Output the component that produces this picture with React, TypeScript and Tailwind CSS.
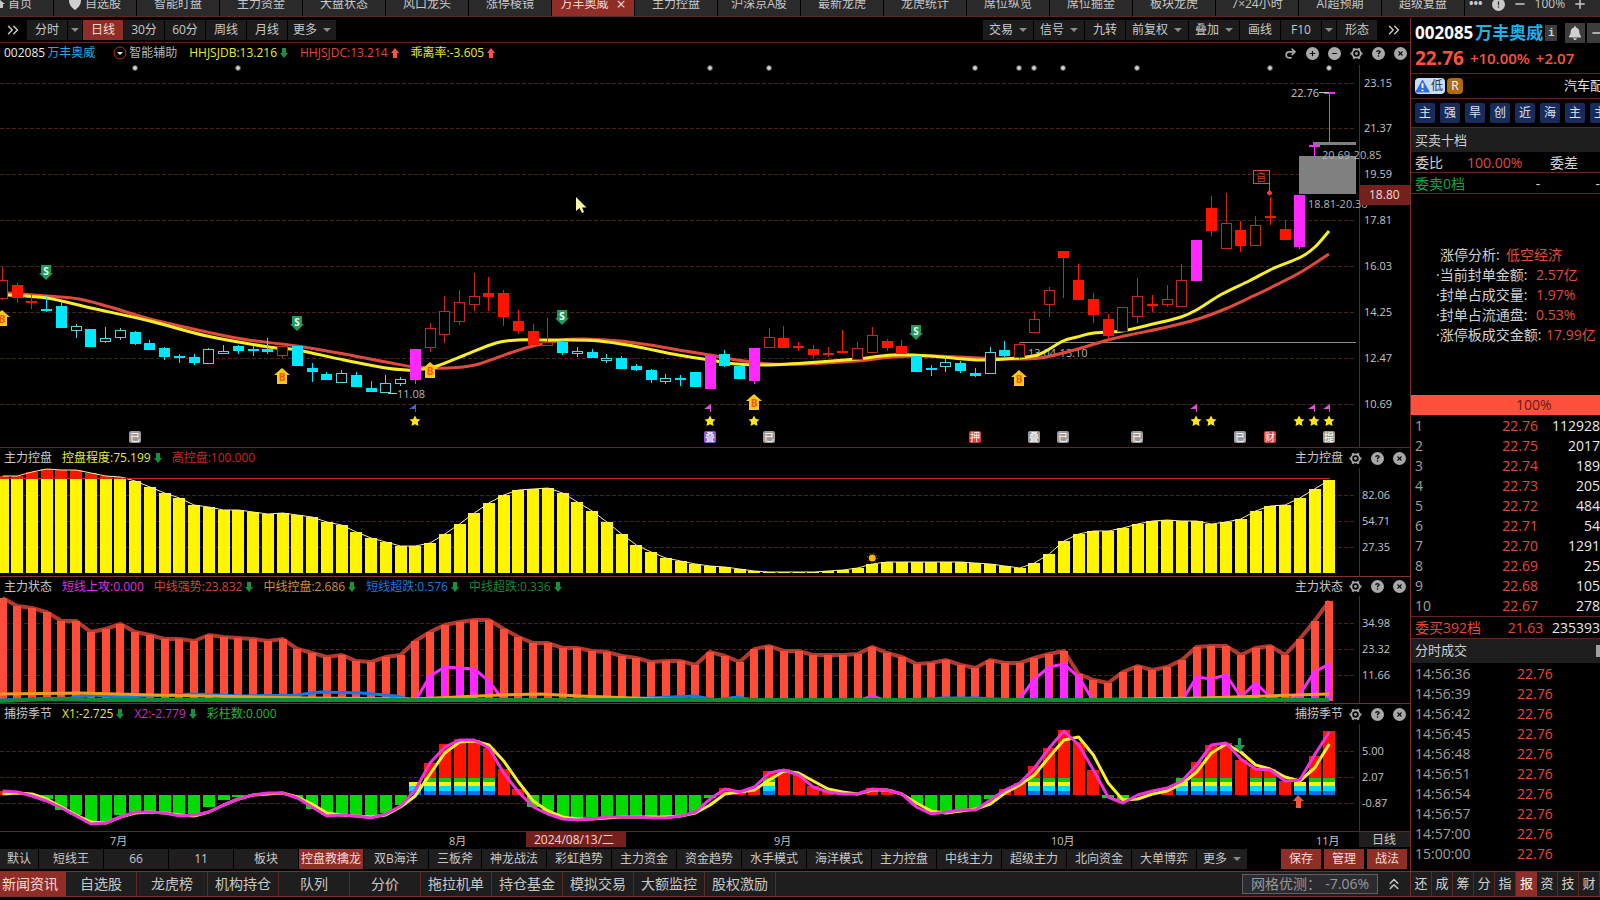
import React from 'react';
import { ChevronsRight, ChevronsUp, Redo2 } from 'lucide-react';
import {
  FaBell,
  FaCircleExclamation,
  FaCircleMinus,
  FaCirclePlus,
  FaCircleQuestion,
  FaCircleXmark,
  FaMinus,
  FaPlus,
} from 'react-icons/fa6';

const STEP = 14.742;
const px = (i: number) => 2.5 + i * STEP;

// kind: r/c hollow red/cyan, R/C/M filled red/cyan/magenta
type Candle = [string, number, number, number, number];

// [kind, body top, body bottom, high, low]
const candles: Candle[] = [
  ['r', 280, 299, 267, 300], ['R', 285, 298, 283, 303], ['R', 301, 303, 295, 309], ['C', 309, 311, 295, 312],
  ['C', 306, 328, 302, 328], ['c', 326, 331, 324, 338], ['C', 329, 347, 329, 347], ['c', 338, 342, 327, 343],
  ['c', 330, 338, 328, 340], ['C', 332, 344, 331, 345], ['C', 343, 350, 340, 350], ['C', 348, 357, 347, 360],
  ['C', 356, 358, 354, 363], ['C', 357, 363, 354, 365], ['c', 349, 364, 348, 364], ['c', 351, 354, 345, 354],
  ['C', 346, 351, 345, 354], ['C', 349, 351, 346, 356], ['C', 349, 352, 338, 354], ['r', 346, 356, 345, 358],
  ['C', 346, 366, 346, 366], ['C', 368, 372, 363, 382], ['C', 374, 380, 372, 380], ['c', 373, 383, 370, 383],
  ['C', 375, 387, 372, 387], ['C', 388, 392, 381, 392], ['c', 383, 393, 375, 393], ['c', 379, 384, 377, 386],
  ['M', 349, 380, 349, 384], ['r', 328, 348, 323, 352], ['r', 311, 335, 296, 343], ['r', 302, 322, 290, 325],
  ['r', 296, 305, 273, 311], ['R', 293, 297, 277, 311], ['R', 293, 317, 290, 326], ['R', 321, 331, 310, 334],
  ['R', 331, 345, 324, 345], ['r', 342, 346, 318, 346], ['C', 342, 353, 340, 355], ['c', 351, 354, 347, 357],
  ['C', 352, 358, 349, 358], ['c', 358, 361, 354, 363], ['C', 358, 369, 356, 369], ['C', 366, 370, 364, 371],
  ['C', 370, 380, 369, 383], ['c', 378, 382, 374, 384], ['C', 378, 380, 375, 386], ['C', 372, 387, 372, 387],
  ['M', 356, 389, 356, 389], ['C', 354, 366, 350, 367], ['C', 366, 379, 366, 379], ['M', 348, 381, 348, 384],
  ['r', 337, 348, 328, 348], ['R', 338, 348, 326, 348], ['R', 346, 348, 342, 351], ['R', 349, 355, 345, 358],
  ['r', 353, 355, 347, 357], ['R', 351, 353, 330, 353], ['r', 348, 360, 342, 360], ['r', 335, 353, 327, 353],
  ['R', 341, 348, 339, 351], ['R', 346, 354, 340, 354], ['C', 356, 372, 356, 372], ['C', 368, 370, 365, 376],
  ['c', 362, 367, 356, 372], ['C', 363, 371, 361, 373], ['C', 373, 376, 368, 377], ['c', 352, 374, 347, 374],
  ['C', 350, 356, 341, 357], ['r', 344, 358, 342, 359], ['r', 319, 333, 311, 333], ['r', 290, 305, 287, 317],
  ['R', 251, 258, 251, 298], ['R', 280, 300, 264, 300], ['R', 299, 315, 293, 323], ['R', 319, 336, 314, 340],
  ['r', 307, 332, 307, 332], ['r', 296, 317, 278, 323], ['R', 304, 306, 295, 312], ['r', 299, 305, 285, 307],
  ['r', 280, 307, 264, 307], ['M', 240, 281, 240, 281], ['R', 208, 231, 196, 236], ['r', 223, 249, 193, 249],
  ['R', 230, 246, 221, 252], ['r', 225, 246, 216, 246], ['R', 216, 218, 197, 225], ['R', 229, 240, 220, 240],
  ['M', 195, 247, 195, 249], ['M', 145, 147, 143, 157], ['M', 92, 94, 92, 143],
];

const maFast: [number, number][] = [
  [8, 295], [47, 298], [91, 308], [150, 321], [207, 336], [269, 347], [297, 350], [344, 360], [386, 368], [406, 370],
  [415, 370], [437, 366], [465, 355], [496, 343], [518, 340], [533, 340], [562, 340], [599, 341], [633, 346],
  [678, 355], [710, 360], [737, 364], [764, 365], [805, 363], [857, 359], [892, 355], [931, 356], [978, 360],
  [1019, 358], [1040, 354], [1063, 341], [1077, 337], [1094, 333], [1122, 331], [1153, 324], [1181, 317],
  [1198, 309], [1222, 294], [1249, 281], [1272, 269], [1301, 257], [1315, 247], [1329, 231],
];

const maSlow: [number, number][] = [
  [8, 293], [47, 296], [79, 299], [110, 307], [150, 319], [207, 332], [248, 340], [297, 346], [344, 354], [386, 362],
  [415, 367], [448, 368], [475, 365], [510, 353], [533, 346], [562, 340], [585, 339], [620, 341], [650, 345],
  [685, 351], [710, 355], [737, 360], [771, 364], [805, 364], [857, 361], [892, 357], [931, 356], [978, 358],
  [1019, 359], [1040, 358], [1063, 353], [1088, 346], [1108, 340], [1129, 335], [1163, 328], [1198, 319],
  [1225, 309], [1249, 298], [1272, 287], [1301, 272], [1329, 254],
];

const control = [
  476, 476, 472, 469, 470, 470, 473, 476, 477, 481, 487, 493, 498, 505, 507, 510, 510, 512, 514, 513,
  515, 517, 522, 525, 532, 538, 542, 546, 546, 543, 534, 524, 513, 503, 495, 490, 489, 488, 493, 502,
  511, 522, 534, 545, 552, 558, 561, 564, 566, 567, 569, 571, 572, 572, 572, 572, 571, 570, 568, 564,
  562, 562, 562, 562, 562, 562, 563, 564, 566, 568, 563, 554, 541, 534, 531, 531, 528, 524, 521, 520,
  521, 521, 524, 522, 519, 511, 506, 505, 498, 489, 480,
];

const strength = [
  598, 606, 608, 612, 621, 621, 632, 629, 624, 632, 635, 639, 639, 641, 635, 637, 638, 639, 641, 639,
  649, 653, 657, 655, 661, 662, 657, 655, 641, 632, 625, 622, 620, 620, 629, 637, 643, 643, 648, 648,
  651, 652, 656, 658, 662, 661, 661, 665, 652, 656, 662, 649, 646, 651, 651, 655, 655, 655, 654, 647,
  653, 657, 664, 663, 660, 665, 668, 660, 663, 663, 658, 654, 651, 674, 680, 683, 672, 666, 670, 667,
  660, 647, 646, 646, 655, 648, 646, 655, 639, 621, 601,
];

// short-term attack: [first index, tops]
const attacks: [number, number[]][] = [
  [28, [701, 676, 667, 668, 669, 681, 701]],
  [58, [701, 696, 701]],
  [69, [699, 679, 667, 664, 677, 701]],
  [80, [701, 677, 679, 675, 697, 683, 697, 701, 694, 672, 664]],
];

const x1 = [
  794, 793, 794, 799, 807, 815, 822, 823, 817, 813, 812, 813, 815, 816, 812, 805, 799, 795, 794, 793,
  797, 804, 813, 815, 816, 817, 815, 807, 796, 774, 753, 742, 741, 745, 761, 782, 801, 811, 817, 819,
  819, 818, 817, 817, 817, 817, 816, 813, 805, 794, 792, 790, 780, 771, 773, 781, 789, 792, 794, 790,
  790, 794, 803, 811, 813, 811, 809, 804, 793, 785, 775, 757, 740, 737, 755, 783, 800, 799, 794, 791,
  784, 772, 753, 744, 752, 765, 769, 777, 781, 768, 744,
];

const x2 = [
  791, 792, 796, 801, 808, 816, 824, 823, 817, 812, 812, 813, 816, 815, 812, 805, 799, 795, 793, 793,
  798, 807, 816, 815, 816, 818, 814, 806, 790, 763, 747, 740, 740, 748, 773, 792, 807, 814, 819, 820,
  819, 817, 817, 817, 818, 818, 816, 812, 799, 789, 792, 787, 773, 770, 775, 787, 792, 794, 794, 789,
  790, 794, 807, 814, 812, 810, 810, 800, 790, 783, 768, 748, 731, 745, 770, 797, 803, 795, 791, 788,
  781, 765, 745, 743, 759, 769, 770, 781, 780, 755, 732,
];

const seasonBars: Record<number, number> = {
  0: 791, 3: 799, 4: 810, 5: 815, 6: 823, 7: 822, 8: 815, 9: 812, 10: 812, 11: 813, 12: 815, 13: 815, 14: 807,
  15: 800, 16: 797, 20: 798, 21: 809, 22: 815, 23: 815, 24: 816, 25: 817, 26: 813, 27: 805, 28: 782, 29: 763,
  30: 744, 31: 739, 32: 740, 33: 748, 34: 769, 35: 789, 36: 807, 37: 811, 38: 817, 39: 819, 40: 817, 41: 817,
  42: 817, 43: 817, 44: 817, 45: 817, 46: 815, 47: 812, 48: 798, 49: 788, 50: 792, 51: 787, 52: 771, 53: 769,
  54: 774, 55: 786, 56: 791, 57: 793, 59: 788, 60: 789, 62: 805, 63: 812, 64: 812, 65: 810, 66: 808, 67: 799,
  68: 789, 69: 783, 70: 766, 71: 748, 72: 730, 73: 742, 74: 770, 75: 798, 76: 800, 79: 788, 80: 778, 81: 762,
  82: 745, 83: 743, 84: 760, 85: 768, 86: 769, 87: 781, 88: 782, 89: 756, 90: 731,
};
const rainbow = [28, 29, 30, 31, 32, 33, 52, 70, 71, 72, 80, 81, 82, 83, 85, 86, 88, 89, 90];
const bands: [number, number, string][] = [
  [778, 4, '#12c812'],
  [782, 4, '#f6f600'],
  [786, 5, '#00dcff'],
  [791, 4, '#1070e8'],
];

const toPoints = (ys: number[], from = 0) => ys.map((y, i) => `${px(from + i)},${y}`).join(' ');

const smooth = (pts: [number, number][]) => {
  let d = `M${pts[0][0]} ${pts[0][1]}`;
  for (let i = 0; i < pts.length - 1; i++) {
    const a = pts[Math.max(i - 1, 0)];
    const b = pts[i];
    const c = pts[i + 1];
    const e = pts[Math.min(i + 2, pts.length - 1)];
    d += ` C${b[0] + (c[0] - a[0]) / 6} ${b[1] + (c[1] - a[1]) / 6} ${c[0] - (e[0] - b[0]) / 6} ${c[1] - (e[1] - b[1]) / 6} ${c[0]} ${c[1]}`;
  }
  return d;
};

const Grid = ({ rows, x, top, bottom }: { rows: [number, string][]; x: number; top: number; bottom: number }) => (
  <g>
    {rows.map(([y, label]) => (
      <g key={label}>
        <line x1="0" x2="1356" y1={y + 0.5} y2={y + 0.5} stroke="#4a201a" strokeDasharray="4 2" />
        <text x={x} y={y + 4} fill="#c4c4c4" fontSize="11">{label}</text>
      </g>
    ))}
    <line x1="1359.5" x2="1359.5" y1={top} y2={bottom} stroke="#5e2620" />
  </g>
);

const SellMark = ({ i, y }: { i: number; y: number }) => (
  <g transform={`translate(${Math.floor(px(i))} ${y})`}>
    <path d="M-5 0H5V8H7L0 15L-7 8H-5Z" fill="#1d9b5b" />
    <text y="10" fill="#fff" fontSize="10" fontWeight="700" textAnchor="middle">S</text>
  </g>
);

const BuyMark = ({ i, y }: { i: number; y: number }) => (
  <g transform={`translate(${Math.floor(px(i))} ${y})`}>
    <path d="M0 0L8 7H5V16H-5V7H-8Z" fill="#ffc814" />
    <text y="13" fill="#f05a14" fontSize="10" fontWeight="700" textAnchor="middle">B</text>
  </g>
);

const badges: [number, string, string][] = [
  [9, '已', '#9a9a9a'], [48, '叠', '#8a5ad0'], [52, '已', '#9a9a9a'], [66, '押', '#d04040'], [70, '叠', '#9a9a9a'],
  [72, '已', '#9a9a9a'], [77, '已', '#9a9a9a'], [84, '已', '#9a9a9a'], [86, '财', '#e04040'], [90, '提', '#9a9a9a'],
];

const KlineChart = () => (
  <svg viewBox="0 63 1410 384" className="block w-full h-auto">
    <Grid
      x={1364}
      top={65}
      bottom={447}
      rows={[[83, '23.15'], [128, '21.37'], [174, '19.59'], [220, '17.81'], [266, '16.03'], [312, '14.25'], [358, '12.47'], [404, '10.69']]}
    />
    {[9, 16, 48, 52, 66, 69, 70, 72, 77, 86, 90].map((i) => (
      <circle key={i} cx={Math.floor(px(i))} cy="68" r="2.5" fill="#d0d0d0" stroke="#4a4a4a" />
    ))}
    <path d="M1019 342.5H1356" stroke="#8c8c8c" />
    <text x="1028" y="357" fill="#b4b4b4" fontSize="11">13.04-13.10</text>
    <rect x="1313" y="142" width="43" height="3" fill="#808080" />
    <text x="1308" y="208" fill="#b4b4b4" fontSize="11">18.81-20.30</text>
    <path d={smooth(maSlow)} fill="none" stroke="#e04a3c" strokeWidth="3" />
    <path d={smooth(maFast)} fill="none" stroke="#f8ee28" strokeWidth="3" />
    {candles.map(([kind, top, bottom, high, low], i) => {
      const x = Math.floor(px(i));
      const color = { r: '#c42a20', R: '#ff1400', c: '#58d4dc', C: '#00e8ff', M: '#ff28ff' }[kind];
      const hollow = kind === 'r' || kind === 'c';
      return (
        <g key={i}>
          <path d={`M${x + 0.5} ${high}V${top}M${x + 0.5} ${bottom}V${low}`} stroke={color} />
          {hollow ? (
            <rect x={x - 4.5} y={top + 0.5} width="10" height={bottom - top - 1} fill="#000" stroke={color} />
          ) : (
            <rect x={x - 5} y={top} width="11" height={bottom - top} fill={color} />
          )}
        </g>
      );
    })}
    <rect x="1299" y="156" width="57" height="38" fill="#808080" />
    <text x="1322" y="159" fill="#b4b4b4" fontSize="11">20.69-20.85</text>
    <text x="1291" y="97" fill="#c4c4c4" fontSize="11">22.76</text>
    <path d="M1319 92.5H1329M388 393.5H397" stroke="#c4c4c4" />
    <text x="397" y="398" fill="#b4b4b4" fontSize="11">11.08</text>
    <g fill="none" stroke="#e04a3c">
      <rect x="1253.5" y="170.5" width="16" height="13" />
      <path d="M1269.5 184V193" />
      <circle cx="1269.5" cy="193" r="2" fill="#ff3c28" />
    </g>
    <text x="1261" y="181" fill="#c83c30" fontSize="10" textAnchor="middle">自</text>
    <SellMark i={3} y={265} />
    <SellMark i={20} y={316} />
    <SellMark i={38} y={310} />
    <SellMark i={62} y={325} />
    <BuyMark i={0} y={310} />
    <BuyMark i={19} y={368} />
    <BuyMark i={29} y={362} />
    <BuyMark i={51} y={394} />
    <BuyMark i={69} y={370} />
    {[28, 48, 81, 89, 90].map((i) => (
      <path key={i} transform={`translate(${Math.floor(px(i))} 408)`} d="M1 -4V4H0V1H-6Z" fill={i === 28 ? '#3c64c8' : '#e050d8'} />
    ))}
    {[28, 48, 51, 81, 82, 88, 89, 90].map((i) => (
      <path
        key={i}
        transform={`translate(${Math.floor(px(i))} 421)`}
        d="M0 -5.5L1.8 -2L5.5 -1.5L2.8 1L3.5 5L0 3.2L-3.5 5L-2.8 1L-5.5 -1.5L-1.8 -2Z"
        fill="#ffe614"
      />
    ))}
    {badges.map(([i, label, color]) => (
      <g key={i}>
        <rect x={Math.floor(px(i)) - 6} y="431" width="12" height="12" rx="2" fill={color} />
        <text x={Math.floor(px(i))} y="441" fill="#fff" fontSize="10" textAnchor="middle">{label}</text>
      </g>
    ))}
    <rect x="1360" y="185" width="50" height="20" fill="#74201c" />
    <text x="1369" y="199" fill="#f0dcdc" fontSize="12">18.80</text>
    <path d="M576 197V211L579.5 208L582 213L584 212L582 207.5H586.5Z" fill="#f8f8a8" />
  </svg>
);

const ControlChart = () => (
  <svg viewBox="0 468 1410 108" className="block w-full h-auto">
    <Grid x={1362} top={468} bottom={576} rows={[[495, '82.06'], [521, '54.71'], [547, '27.35']]} />
    {control.map((y, i) => (
      <g key={i}>
        <rect x={Math.round(px(i)) - 6} y={Math.max(y, 479)} width="12" height={573 - Math.max(y, 479)} fill="#fff500" />
        {y < 479 && <rect x={Math.round(px(i)) - 6} y={y} width="12" height={479 - y} fill="#ff1400" />}
      </g>
    ))}
    <polyline points={toPoints(control)} fill="none" stroke="#f8f0a0" />
    <path d="M0 478.5H1330" stroke="#c8281e" />
    <circle cx={px(59)} cy="558" r="3.5" fill="#ffb400" />
    <circle cx={px(59)} cy="558" r="5" fill="none" stroke="#c88200" strokeDasharray="1 3" />
  </svg>
);

const StateChart = () => (
  <svg viewBox="0 596 1410 107" className="block w-full h-auto">
    <Grid x={1362} top={596} bottom={703} rows={[[623, '34.98'], [649, '23.32'], [675, '11.66']]} />
    <polyline points={toPoints(strength)} fill="none" stroke="#b03a30" strokeWidth="4" />
    {strength.map((y, i) => (
      <rect key={i} x={Math.round(px(i)) - 4} y={y} width="8" height={701 - y} fill="#ff4c38" />
    ))}
    {attacks.map(([from, ys]) => (
      <g key={from}>
        <polyline points={toPoints(ys, from)} fill="none" stroke="#ff28ff" strokeWidth="3" />
        {ys.map((y, i) => (
          <rect key={i} x={Math.round(px(from + i)) - 4} y={y} width="7" height={701 - y} fill="#ff28ff" />
        ))}
      </g>
    ))}
    <path
      d="M0 700L70 698L93 695L120 697L193 694L241 696L296 695L320 692L362 693L396 696L413 700H530L650 698L695 696L716 700L737 697L754 700H910L943 698L978 698L1012 700H1329"
      fill="none"
      stroke="#1478f0"
      strokeWidth="3"
    />
    <path
      d="M0 694L80 693L155 695L310 698L413 699L500 695L540 694L580 696L633 698L690 700H1060L1200 698L1266 696L1329 694"
      fill="none"
      stroke="#f09a1e"
      strokeWidth="3"
    />
    <path d="M0 701L45 699L100 700H1329" fill="none" stroke="#128c32" strokeWidth="4" />
  </svg>
);

const SeasonChart = () => (
  <svg viewBox="0 724 1410 124" className="block w-full h-auto">
    <Grid x={1362} top={724} bottom={831} rows={[[751, '5.00'], [777, '2.07'], [803, '-0.87']]} />
    {Object.entries(seasonBars).map(([key, y]) => {
      const i = Number(key);
      const x = Math.round(px(i)) - 6;
      return (
        <g key={key}>
          <rect x={x} y={Math.min(y, 795)} width="12" height={Math.abs(y - 795)} fill={y > 795 ? '#00dc00' : '#ff1400'} />
          {rainbow.includes(i) &&
            bands
              .filter(([top]) => top >= y)
              .map(([top, height, color]) => <rect key={top} x={x} y={top} width="12" height={height} fill={color} />)}
        </g>
      );
    })}
    <polyline points={toPoints(x1)} fill="none" stroke="#f8f028" strokeWidth="3" strokeLinejoin="round" />
    <polyline points={toPoints(x2)} fill="none" stroke="#f032dc" strokeWidth="3" strokeLinejoin="round" />
    <path d="M1238 738H1241V745H1245L1240 752L1234 745H1238Z" fill="#1d9b5b" />
    <path d="M1296 808H1301V801H1304L1298 795L1293 801H1296Z" fill="#ff5038" />
    <path d="M0 831.5H1410" stroke="#5e2620" />
    <g fill="#c4c4c4" fontSize="11">
      <text x="110" y="845">7月</text>
      <text x="449" y="845">8月</text>
      <text x="774" y="845">9月</text>
      <text x="1051" y="845">10月</text>
      <text x="1316" y="845">11月</text>
    </g>
    <rect x="526" y="832" width="100" height="15" fill="#74201c" />
    <text x="534" y="844" fill="#f0dcdc" fontSize="12">2024/08/13/二</text>
    <rect x="1359" y="832" width="51" height="15" fill="#1e1e1e" />
    <text x="1372" y="844" fill="#c8c8c8" fontSize="12">日线</text>
  </svg>
);

const Trend = ({ up }: { up?: boolean }) => (
  <svg viewBox="0 0 8 10" className="w-2 h-2.5 ml-[3px] shrink-0">
    {up ? <path d="M4 0L8 5H6V10H2V5H0Z" fill="#ff5040" /> : <path d="M4 10L8 5H6V0H2V5H0Z" fill="#189040" />}
  </svg>
);

const Caret = () => <span className="border-x-4 border-t-4 border-x-transparent border-t-[#8a8a8a]" />;

const Gear = () => (
  <svg viewBox="0 0 14 14" className="size-[13px]" fill="none" stroke="#a8a8a8">
    <circle cx="7" cy="7" r="4.5" strokeWidth="2" />
    <circle cx="7" cy="7" r="1" strokeWidth="1.2" />
    <path d="M0.5 7H2.5M11.5 7H13.5M3.7 1.4L4.7 3.1M9.3 10.9L10.3 12.6M10.3 1.4L9.3 3.1M4.7 10.9L3.7 12.6" strokeWidth="2.4" />
  </svg>
);

const PanelIcons = () => (
  <div className="flex gap-[9px] text-[13px] text-[#a8a8a8]">
    <button aria-label="设置"><Gear /></button>
    <button aria-label="帮助"><FaCircleQuestion /></button>
    <button aria-label="关闭"><FaCircleXmark /></button>
  </div>
);

type Reading = { text: string; color: string; down?: boolean };

const PanelHeader = ({ title, readings, height = 'h-5' }: { title: string; readings: Reading[]; height?: string }) => (
  <div className={`${height} pl-1 pr-1 flex items-center justify-between text-[#c8c8c8]`}>
    <div className="flex items-center gap-2.5">
      <span>{title}</span>
      {readings.map((r) => (
        <span key={r.text} className={`flex items-center ${r.color}`}>
          {r.text}
          {r.down && <Trend />}
        </span>
      ))}
    </div>
    <div className="flex items-center gap-1.5">
      <span>{title}</span>
      <PanelIcons />
    </div>
  </div>
);

const tabs = [
  '智能盯盘', '主力资金', '大盘状态', '风口龙头', '涨停棱镜', '万丰奥威', '主力控盘', '沪深京A股', '最新龙虎',
  '龙虎统计', '席位纵览', '席位掘金', '板块龙虎', '7×24小时', 'AI超预期', '超级复盘',
];

const TopTabs = () => (
  <nav className="h-[17px] flex gap-px overflow-hidden whitespace-nowrap leading-2 text-[#c8c8c8] border-b border-[#5e2620]">
    <button className="w-[53px] h-4 shrink-0 bg-[#2a2a2a] flex items-start gap-0.5">
      <svg viewBox="0 0 6 8" className="w-1.5 h-2"><path d="M0 0L5 4H3V8H0Z" fill="#c8c8c8" /></svg>
      首页
    </button>
    <button className="w-[82px] h-4 shrink-0 bg-[#2a2a2a] flex items-start justify-center gap-1">
      <svg viewBox="0 0 12 10" className="w-3 h-2.5"><path d="M0 0H12C12 5 9 8 6 10C3 8 0 5 0 0Z" fill="#d0d0d0" /></svg>
      自选股
    </button>
    {tabs.map((tab) =>
      tab === '万丰奥威' ? (
        <button key={tab} className="w-[82px] h-4 shrink-0 bg-[#8f2e27] text-[#f0d8d4] flex items-start justify-center gap-2">
          {tab}
          <span className="text-[16px]">×</span>
        </button>
      ) : (
        <button key={tab} className="w-[82px] h-4 shrink-0 bg-[#2a2a2a] flex items-start justify-center">{tab}</button>
      ),
    )}
    <div className="flex-1 h-4 pb-2 bg-[#2a2a2a] pl-1 flex items-center gap-[9px]">
      <span className="font-bold">•••</span>
      <FaCircleExclamation className="size-[13px] shrink-0" />
      <FaMinus className="size-3 shrink-0" />
      <span>100%</span>
      <FaPlus className="size-3 shrink-0" />
    </div>
  </nav>
);

const toolButton = 'h-5 bg-[#1c1c1c] flex items-center justify-center gap-1.5';

const Toolbar = () => (
  <div className="h-[25px] flex items-center justify-between border-b border-[#5e2620] text-[#c8c8c8]">
    <div className="flex items-center gap-px">
      <button aria-label="展开" className="w-[26px] flex justify-center"><ChevronsRight size={18} /></button>
      <button className={`${toolButton} w-10`}>分时</button>
      <button aria-label="分时选项" className={`${toolButton} w-3.5`}><Caret /></button>
      <button className="h-5 w-10 bg-[#8f2e27] text-[#f4dcd8]">日线</button>
      {['30分', '60分', '周线', '月线'].map((t) => (
        <button key={t} className={`${toolButton} w-10`}>{t}</button>
      ))}
      <button className={`${toolButton} w-12`}>更多<Caret /></button>
    </div>
    <div className="flex items-center gap-px">
      <button className={`${toolButton} w-[50px]`}>交易<Caret /></button>
      <button className={`${toolButton} w-[50px]`}>信号<Caret /></button>
      <button className={`${toolButton} w-10`}>九转</button>
      <button className={`${toolButton} w-[62px]`}>前复权<Caret /></button>
      <button className={`${toolButton} w-[50px]`}>叠加<Caret /></button>
      <button className={`${toolButton} w-10`}>画线</button>
      <button className={`${toolButton} w-10`}>F10</button>
      <button aria-label="F10选项" className={`${toolButton} w-3.5`}><Caret /></button>
      <button className={`${toolButton} w-10`}>形态</button>
      <button aria-label="更多工具" className="w-8 flex justify-center"><ChevronsRight size={18} /></button>
    </div>
  </div>
);

const StockHeader = () => (
  <div className="h-5 pl-1 pr-[3px] flex items-center justify-between">
    <div className="flex items-center">
      <span className="text-[#e8e8e8]">002085</span>
      <span className="text-[#28a8e8] ml-0.5">万丰奥威</span>
      <button className="ml-[18px] flex items-center gap-0.5 text-[#b8b8b8]">
        <svg viewBox="0 0 14 14" className="size-3.5">
          <circle cx="7" cy="7" r="6" fill="none" stroke="#b03428" />
          <path d="M4 6H10L7 9Z" fill="#e8e8e8" />
        </svg>
        智能辅助
      </button>
      <span className="ml-3 flex items-center text-[#e8e838]">HHJSJDB:13.216<Trend /></span>
      <span className="ml-3 flex items-center text-[#e04a3c]">HHJSJDC:13.214<Trend up /></span>
      <span className="ml-3 flex items-center text-[#e8e838]">乖离率:-3.605<Trend up /></span>
    </div>
    <div className="flex items-center gap-[9px] text-[13px] text-[#a8a8a8]">
      <button aria-label="恢复"><Redo2 size={13} strokeWidth={3} /></button>
      <button aria-label="放大"><FaCirclePlus /></button>
      <button aria-label="缩小"><FaCircleMinus /></button>
      <PanelIcons />
    </div>
  </div>
);

const schemes = [
  '彩虹趋势', '主力资金', '资金趋势', '水手模式', '海洋模式', '主力控盘', '中线主力', '超级主力', '北向资金', '大单博弈',
];

const SchemeTabs = () => (
  <div className="pt-px pb-0.5 pr-[3px] flex justify-between text-[#c8c8c8]">
    <div className="flex gap-px">
      <button className="h-5 w-[38px] bg-[#1e1e1e]">默认</button>
      {['短线王', '66', '11', '板块'].map((t) => (
        <button key={t} className="h-5 w-16 bg-[#1e1e1e]">{t}</button>
      ))}
      <button className="h-5 w-16 bg-[#8f2e27] text-[#f4dcd8]">控盘教擒龙</button>
      <button className="h-5 w-16 bg-[#1e1e1e]">双B海洋</button>
      <button className="h-5 w-[52px] bg-[#1e1e1e]">三板斧</button>
      <button className="h-5 w-16 bg-[#1e1e1e]">神龙战法</button>
      {schemes.map((t) => (
        <button key={t} className="h-5 w-16 bg-[#1e1e1e]">{t}</button>
      ))}
      <button className="h-5 w-[50px] bg-[#1e1e1e] flex items-center justify-center gap-1.5">更多<Caret /></button>
    </div>
    <div className="flex gap-[3px] text-[#f4dcd8]">
      <button className="h-5 w-10 bg-[#8f2e27]">保存</button>
      <button className="h-5 w-10 bg-[#8f2e27]">管理</button>
      <button className="h-5 w-10 bg-[#8f2e27]">战法</button>
    </div>
  </div>
);

const infoTabs = ['自选股', '龙虎榜', '机构持仓', '队列', '分价', '拖拉机单', '持仓基金', '模拟交易', '大额监控', '股权激励'];

const InfoTabs = () => (
  <div className="h-[26px] flex items-center bg-[#1e1e1e] border-y border-[#7a2e26] text-[14px] text-[#c8c8c8]">
    <button className="w-[66px] h-6 pr-1.5 pb-0.5 bg-[#8f2e27] text-[#f4dcd8]">新闻资讯</button>
    {infoTabs.map((t) => (
      <button key={t} className="w-[71px] h-6 pb-0.5 border-r border-[#5e2620]">{t}</button>
    ))}
    <div className="ml-auto w-[136px] h-5 px-2 pb-0.5 flex items-center justify-between bg-[#2c2c30] border border-[#606064] text-[#98989c]">
      <span>网格优测：</span>
      <span>-7.06%</span>
    </div>
    <button aria-label="展开资讯" className="w-8 flex justify-center"><ChevronsUp size={18} /></button>
  </div>
);

const orders: [string, string][] = [
  ['22.76', '112928'], ['22.75', '2017'], ['22.74', '189'], ['22.73', '205'], ['22.72', '484'],
  ['22.71', '54'], ['22.70', '1291'], ['22.69', '25'], ['22.68', '105'], ['22.67', '278'],
];

const ticks = [
  '14:56:36', '14:56:39', '14:56:42', '14:56:45', '14:56:48', '14:56:51', '14:56:54', '14:56:57', '14:57:00', '15:00:00',
];

const Quote = () => (
  <aside className="w-[190px] shrink-0 overflow-hidden flex flex-col border-l border-[#7a2e26] text-[14px] text-[#d0d0d0] whitespace-nowrap">
    <div className="h-[30px] pl-1 flex items-center text-[17px]">
      <span className="font-bold text-white">002085</span>
      <span className="ml-0.5 font-bold text-[#20b0f0]">万丰奥威</span>
      <span className="ml-0.5 w-3 h-4 shrink-0 bg-[#3c3c3c] text-[11px] leading-4 text-center font-mono font-bold">i</span>
      <button aria-label="提醒" className="ml-2 w-5 h-5 shrink-0 bg-[#3c3c3c] flex items-center justify-center"><FaBell size={14} /></button>
      <button aria-label="删除" className="ml-0.5 w-5 h-5 shrink-0 bg-[#3c3c3c] flex items-center justify-center"><FaMinus size={12} /></button>
    </div>
    <div className="h-[26px] pl-1 pb-1 flex items-center gap-1.5 border-b border-[#5e2620] text-[15px] font-semibold text-[#ff503c]">
      <span className="text-[19px] font-bold">22.76</span>
      <span>+10.00%</span>
      <span>+2.07</span>
    </div>
    <div className="h-[25px] pl-1 flex items-center border-b border-[#5e2620] text-[13px]">
      <span className="h-4 w-[30px] shrink-0 flex items-center rounded-sm bg-[#c8dcf8] text-[12px] text-[#303030]">
        <svg viewBox="0 0 17 16" className="w-4 h-4">
          <path d="M8 1L16 15H0Z" fill="#2c6ce0" />
          <path d="M8 5V10M8 12V13.5" stroke="#fff" strokeWidth="2" />
        </svg>
        低
      </span>
      <span className="ml-0.5 h-4 w-4 shrink-0 rounded-sm bg-[#b06a10] text-[12px] leading-4 text-center text-white">R</span>
      <span className="ml-auto -mr-4 text-[#e0e0e0]">汽车配件</span>
    </div>
    <div className="h-[29px] pl-1 flex items-center gap-[5px] border-b border-[#5e2620] text-[12px] text-[#dce4f4]">
      {['主', '强', '旱', '创', '近', '海', '主', '主'].map((t, i) => (
        <a key={i} href="#tag" className="size-5 shrink-0 rounded-xs bg-[#182c5c] leading-5 text-center">{t}</a>
      ))}
    </div>
    <h2 className="h-6 pl-1 bg-[#1e1e1e] text-[13px] leading-6">买卖十档</h2>
    <div className="h-[21px] pl-1 flex items-center border-b border-[#5e2620]">
      <span className="w-[52px]">委比</span>
      <span className="w-[83px] text-[#e04a3c]">100.00%</span>
      <span>委差</span>
    </div>
    <div className="h-[21px] pl-1 flex items-center justify-between border-b border-[#5e2620]">
      <span className="w-[117px] text-[#18a048]">委卖0档</span>
      <span>-</span>
      <span className="w-14 text-right">-</span>
    </div>
    <dl className="pt-[51px] pb-[50px] pl-[25px] leading-5">
      {[
        ['涨停分析:', '低空经济', 'w-[70px] pl-1'],
        ['·当前封单金额:', '2.57亿', 'w-[100px]'],
        ['·封单占成交量:', '1.97%', 'w-[100px]'],
        ['·封单占流通盘:', '0.53%', 'w-[100px]'],
        ['·涨停板成交金额:', '17.99亿', 'w-[110px]'],
      ].map(([label, value, width]) => (
        <div key={label} className="h-5 flex">
          <dt className={`${width} shrink-0`}>{label}</dt>
          <dd className="text-[#e04a3c]">{value}</dd>
        </div>
      ))}
    </dl>
    <div className="h-5 bg-[#ff503c] leading-5 text-[#641c14] pl-[105px]">100%</div>
    <table className="w-full mt-px leading-5">
      <tbody>
        {orders.map(([price, volume], i) => (
          <tr key={price} className="h-5">
            <td className="pl-1 py-0 text-[#a0a0a0]">{i + 1}</td>
            <td className="py-0 text-right text-[#e04a3c]">{price}</td>
            <td className="w-[62px] py-0 text-right text-[#e8e8e8]">{volume}</td>
          </tr>
        ))}
      </tbody>
    </table>
    <div className="h-[23px] pl-1 flex items-center justify-between border-y border-[#5e2620] text-[#e04a3c]">
      <span className="w-20">委买392档</span>
      <span className="pl-1">21.63</span>
      <span className="text-[#e8e8e8]">235393</span>
    </div>
    <div className="h-6 pl-1 flex items-center justify-between bg-[#1e1e1e]">
      <h2 className="text-[13px]">分时成交</h2>
      <span className="w-1 h-3 bg-[#a0a0a0]" />
    </div>
    <table className="w-full mt-px leading-5">
      <tbody>
        {ticks.map((t) => (
          <tr key={t} className="h-5">
            <td className="w-[106px] pl-1 py-0 text-[#a0a0a0]">{t}</td>
            <td className="py-0 text-[#e04a3c]">22.76</td>
          </tr>
        ))}
      </tbody>
    </table>
    <div className="mt-auto h-[26px] flex bg-[#1e1e1e] border-y border-[#7a2e26] text-[13px]">
      {['还', '成', '筹', '分', '指', '报', '资', '技', '财'].map((t) => (
        <button
          key={t}
          className={t === '报' ? 'w-[21px] shrink-0 bg-[#8f2e27] text-white' : 'w-[21px] shrink-0 border-r border-[#5e2620]'}
        >
          {t}
        </button>
      ))}
    </div>
  </aside>
);

export default function App() {
  return (
    <div className="min-h-screen bg-black text-[12px] overflow-hidden font-['Open_Sans','Noto_Sans_CJK_SC',sans-serif]">
      <TopTabs />
      <div className="mt-px flex">
        <main className="flex-1 min-w-0 whitespace-nowrap">
          <Toolbar />
          <section className="border-b border-[#5e2620]">
            <StockHeader />
            <KlineChart />
          </section>
          <section className="border-b border-[#7a3a30]">
            <PanelHeader
              title="主力控盘"
              readings={[
                { text: '控盘程度:75.199', color: 'text-[#e8e838]', down: true },
                { text: '高控盘:100.000', color: 'text-[#c82820]' },
              ]}
            />
            <ControlChart />
          </section>
          <section className="border-b border-[#7a2e26]">
            <PanelHeader
              title="主力状态"
              height="h-[19px]"
              readings={[
                { text: '短线上攻:0.000', color: 'text-[#e030e0]' },
                { text: '中线强势:23.832', color: 'text-[#d04838]', down: true },
                { text: '中线控盘:2.686', color: 'text-[#d09030]', down: true },
                { text: '短线超跌:0.576', color: 'text-[#1878e0]', down: true },
                { text: '中线超跌:0.336', color: 'text-[#188838]', down: true },
              ]}
            />
            <StateChart />
          </section>
          <section>
            <PanelHeader
              title="捕捞季节"
              readings={[
                { text: 'X1:-2.725', color: 'text-[#e8e838]', down: true },
                { text: 'X2:-2.779', color: 'text-[#c832c8]', down: true },
                { text: '彩柱数:0.000', color: 'text-[#20b838]' },
              ]}
            />
            <SeasonChart />
          </section>
          <SchemeTabs />
          <InfoTabs />
        </main>
        <Quote />
      </div>
    </div>
  );
}
